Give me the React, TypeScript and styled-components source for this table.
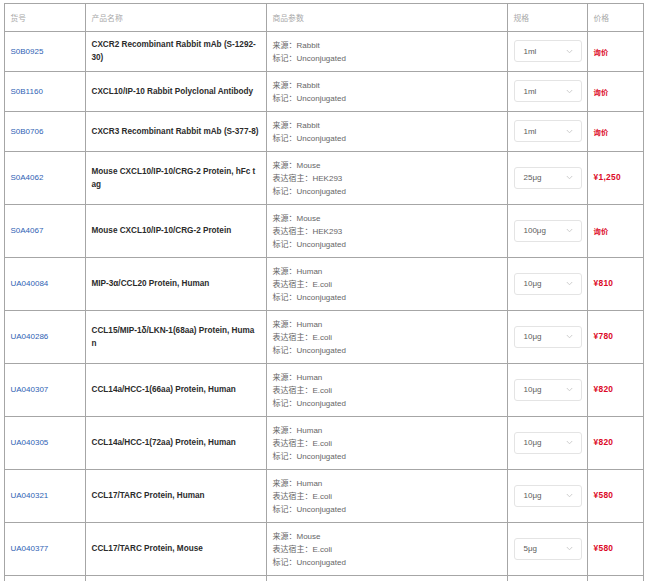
import React from "react";
import styled, { createGlobalStyle } from "styled-components";

const Global = createGlobalStyle`
  html, body { margin: 0; padding: 0; background: #fff; }
  body { font-family: "Liberation Sans", "Noto Sans CJK SC", sans-serif; }
`;

const Page = styled.div`
  padding: 3px 8px 0 4px;
  height: 581px;
  box-sizing: border-box;
  overflow: hidden;
`;

const Table = styled.table`
  width: 639px;
  table-layout: fixed;
  border-collapse: collapse;
  border: 1px solid #a6a6a6;
`;

const Col = styled.col<{ $w: number }>`
  width: ${(p) => p.$w}px;
`;

const HeadCell = styled.th`
  border: 1px solid #a6a6a6;
  padding: 7px 6px 7px 5.5px;
  height: 13px;
  line-height: 13px;
  font-size: 7.8px;
  font-weight: normal;
  color: #a9a9a9;
  text-align: left;
  vertical-align: middle;
  font-family: "Noto Sans CJK SC", sans-serif;
`;

const Cell = styled.td`
  border: 1px solid #a6a6a6;
  padding: 6px 6px 7px 5.5px;
  line-height: 13px;
  vertical-align: middle;
`;

const FillerRow = styled.tr`
  height: 53px;
`;

const IdLink = styled.a`
  display: block;
  font-size: 8px;
  line-height: 13px;
  color: #2f62b4;
  text-decoration: none;
`;

const Name = styled.div`
  font-size: 8.2px;
  line-height: 13px;
  font-weight: bold;
  color: #2b2b2b;
  white-space: pre;
`;

const SpecLine = styled.div`
  display: flex;
  align-items: baseline;
  height: 13px;
  line-height: 13px;
  font-size: 8px;
  color: #666;
  white-space: nowrap;
`;

const SpecLabel = styled.span`
  font-family: "Noto Sans CJK SC", sans-serif;
  font-size: 8px;
  line-height: 13px;
`;

const Select = styled.div`
  width: 68px;
  height: 22px;
  box-sizing: border-box;
  border: 1px solid #e4e4e4;
  border-radius: 3px;
  display: flex;
  align-items: center;
  justify-content: space-between;
  padding: 0 8px 0 9px;
  font-size: 8px;
  color: #5c5c5c;
`;

const Chevron = styled.svg`
  width: 7px;
  height: 5px;
  flex: none;
`;

const Price = styled.div<{ $ask?: boolean }>`
  font-size: ${(p) => (p.$ask ? "7.4px" : "8.4px")};
  line-height: 13px;
  font-weight: bold;
  color: #dc0a28;
  font-family: ${(p) => (p.$ask ? '"Noto Sans CJK SC", sans-serif' : '"Liberation Sans", sans-serif')};
  letter-spacing: ${(p) => (p.$ask ? "0" : "0.3px")};
`;

type Row = {
  id: string;
  name: string;
  specs: [string, string][];
  size: string;
  price: string | null;
};

const rabbit: [string, string][] = [["来源", "Rabbit"], ["标记", "Unconjugated"]];
const prot = (src: string, host: string): [string, string][] => [
  ["来源", src],
  ["表达宿主", host],
  ["标记", "Unconjugated"],
];

const rows: Row[] = [
  { id: "S0B0925", name: "CXCR2 Recombinant Rabbit mAb (S-1292-\n30)", specs: rabbit, size: "1ml", price: null },
  { id: "S0B1160", name: "CXCL10/IP-10 Rabbit Polyclonal Antibody", specs: rabbit, size: "1ml", price: null },
  { id: "S0B0706", name: "CXCR3 Recombinant Rabbit mAb (S-377-8)", specs: rabbit, size: "1ml", price: null },
  { id: "S0A4062", name: "Mouse CXCL10/IP-10/CRG-2 Protein, hFc t\nag", specs: prot("Mouse", "HEK293"), size: "25μg", price: "¥1,250" },
  { id: "S0A4067", name: "Mouse CXCL10/IP-10/CRG-2 Protein", specs: prot("Mouse", "HEK293"), size: "100μg", price: null },
  { id: "UA040084", name: "MIP-3α/CCL20 Protein, Human", specs: prot("Human", "E.coli"), size: "10μg", price: "¥810" },
  { id: "UA040286", name: "CCL15/MIP-1δ/LKN-1(68aa) Protein, Huma\nn", specs: prot("Human", "E.coli"), size: "10μg", price: "¥780" },
  { id: "UA040307", name: "CCL14a/HCC-1(66aa) Protein, Human", specs: prot("Human", "E.coli"), size: "10μg", price: "¥820" },
  { id: "UA040305", name: "CCL14a/HCC-1(72aa) Protein, Human", specs: prot("Human", "E.coli"), size: "10μg", price: "¥820" },
  { id: "UA040321", name: "CCL17/TARC Protein, Human", specs: prot("Human", "E.coli"), size: "10μg", price: "¥580" },
  { id: "UA040377", name: "CCL17/TARC Protein, Mouse", specs: prot("Mouse", "E.coli"), size: "5μg", price: "¥580" },
];

export default function App() {
  return (
    <Page>
      <Global />
      <Table>
        <colgroup>
          <Col $w={81} />
          <Col $w={181} />
          <Col $w={241} />
          <Col $w={80} />
          <Col $w={56} />
        </colgroup>
        <thead>
          <tr>
            <HeadCell>货号</HeadCell>
            <HeadCell>产品名称</HeadCell>
            <HeadCell>商品参数</HeadCell>
            <HeadCell>规格</HeadCell>
            <HeadCell>价格</HeadCell>
          </tr>
        </thead>
        <tbody>
          {rows.map((r) => (
            <tr key={r.id}>
              <Cell>
                <IdLink href="#">{r.id}</IdLink>
              </Cell>
              <Cell>
                <Name>{r.name}</Name>
              </Cell>
              <Cell>
                {r.specs.map(([k, v]) => (
                  <SpecLine key={k}>
                    <SpecLabel>{k}：</SpecLabel>
                    <span>{v}</span>
                  </SpecLine>
                ))}
              </Cell>
              <Cell>
                <Select>
                  <span>{r.size}</span>
                  <Chevron viewBox="0 0 7 5">
                    <path d="M0.8 1 L3.5 3.8 L6.2 1" fill="none" stroke="#c8c8c8" strokeWidth="0.9" />
                  </Chevron>
                </Select>
              </Cell>
              <Cell>
                {r.price ? <Price>{r.price}</Price> : <Price $ask>询价</Price>}
              </Cell>
            </tr>
          ))}
          <FillerRow>
            <Cell />
            <Cell />
            <Cell />
            <Cell />
            <Cell />
          </FillerRow>
        </tbody>
      </Table>
    </Page>
  );
}
